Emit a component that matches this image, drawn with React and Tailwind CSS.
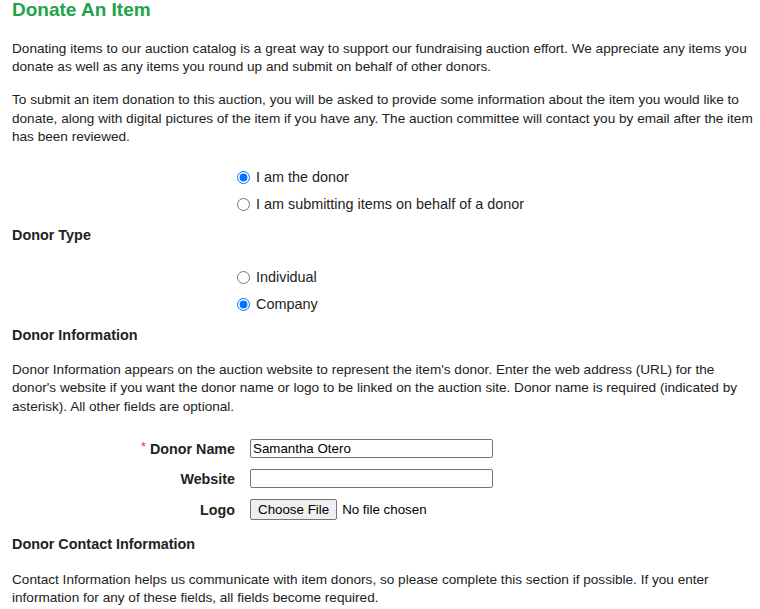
import React from "react";

function Radio({ checked, label, name }) {
  return (
    <label className="flex h-[27px] items-center pl-[225px] text-[14.4px]">
      <input
        type="radio"
        name={name}
        defaultChecked={checked}
        className="m-0 h-[13px] w-[13px]"
      />
      <span className="ml-[6px]">{label}</span>
    </label>
  );
}

function FieldRow({ label, required, children, className = "" }) {
  return (
    <div className={"flex h-[30px] items-center " + className}>
      <div className="w-[223px] text-right text-[14.3px] font-bold">
        {required && <span className="mr-[4px] align-top text-[13px] font-normal leading-[14px] text-[#e8336b]">*</span>}
        {label}
      </div>
      <div className="ml-[15px] flex items-center">{children}</div>
    </div>
  );
}

export default function App() {
  return (
    <div
      className="min-h-[609px] bg-white pl-3 pr-1 text-[13.6px] leading-[18.2px] text-[#222]"
      style={{ fontFamily: '"Liberation Sans", Arial, sans-serif' }}
    >
      <h1 className="h-[20px] text-[19px] font-bold leading-[20px] text-[#1ea34a]">Donate An Item</h1>
      <p className="mt-[20px]">
        Donating items to our auction catalog is a great way to support our fundraising auction effort. We appreciate any items you donate as well as any items you round up and submit on behalf of other donors.
      </p>
      <p className="mt-[15px]">
        To submit an item donation to this auction, you will be asked to provide some information about the item you would like to donate, along with digital pictures of the item if you have any. The auction committee will contact you by email after the item has been reviewed.
      </p>

      <div className="mt-[17.5px]">
        <Radio name="who" checked label="I am the donor" />
        <Radio name="who" label="I am submitting items on behalf of a donor" />
      </div>

      <div className="mt-[8.4px] text-[14.4px] font-bold">Donor Type</div>

      <div className="mt-[19.4px]">
        <Radio name="type" label="Individual" />
        <Radio name="type" checked label="Company" />
      </div>

      <div className="mt-[8.4px] text-[14.4px] font-bold">Donor Information</div>

      <p className="mt-[17.2px]">
        Donor Information appears on the auction website to represent the item's donor. Enter the web address (URL) for the donor's website if you want the donor name or logo to be linked on the auction site. Donor name is required (indicated by asterisk). All other fields are optional.
      </p>

      <div className="mt-[18px]">
        <FieldRow label="Donor Name" required>
          <div className="flex h-[19px] w-[243px] items-center rounded-[2px] border border-[#767676] bg-white px-[2px] text-[13.33px] leading-[16px] text-black">
            Samantha Otero
          </div>
        </FieldRow>
        <FieldRow label="Website">
          <div className="h-[19px] w-[243px] rounded-[2px] border border-[#767676] bg-white" />
        </FieldRow>
        <FieldRow label="Logo" className="mt-px">
          <div className="flex h-[21px] items-center rounded-[2px] border border-[#767676] bg-[#efefef] px-[7px] text-[13.33px] leading-[16px] text-black">
            Choose File
          </div>
          <span className="ml-[5px] text-[13.33px] text-black">No file chosen</span>
        </FieldRow>
      </div>

      <div className="mt-[10px] text-[14.4px] font-bold">Donor Contact Information</div>

      <p className="mt-[18px]">
        Contact Information helps us communicate with item donors, so please complete this section if possible. If you enter information for any of these fields, all fields become required.
      </p>
    </div>
  );
}
